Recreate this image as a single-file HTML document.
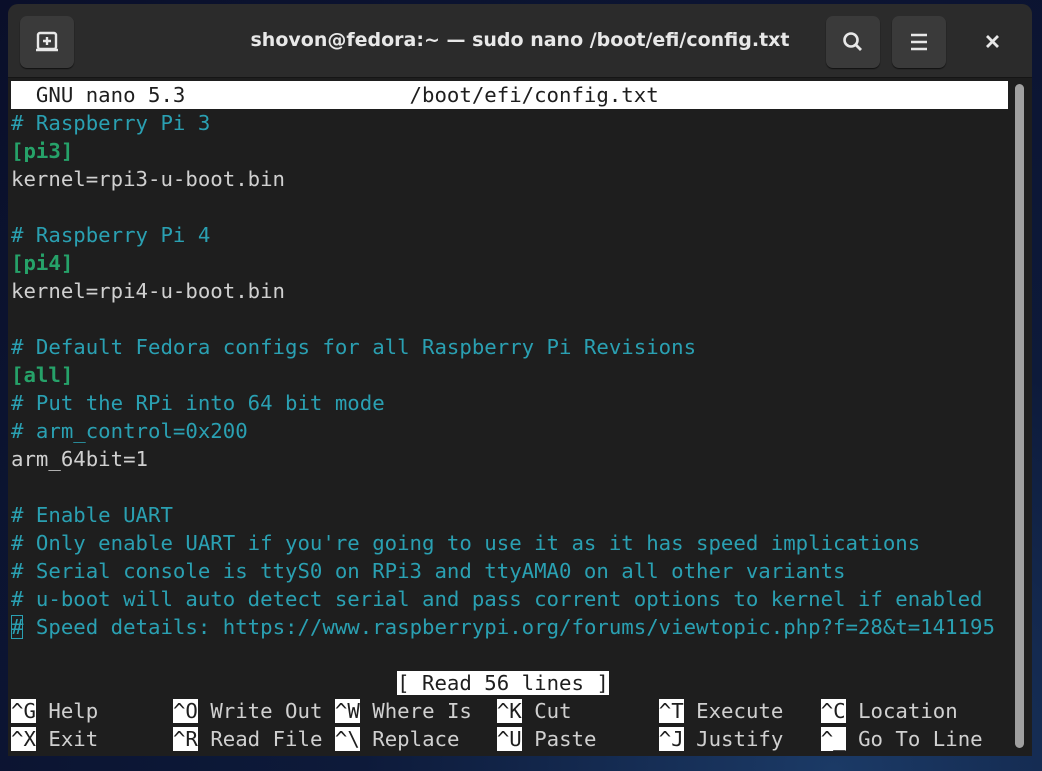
<!DOCTYPE html>
<html><head><meta charset="utf-8"><style>
*{margin:0;padding:0;box-sizing:border-box}
body{width:1042px;height:771px;overflow:hidden;background:radial-gradient(ellipse at 80% 100%,#1b3a66 0%,#0d1a3a 40%,#0a0f2a 100%);position:relative;font-family:"DejaVu Sans Mono","Liberation Mono",monospace}
.win{position:absolute;left:8px;top:4px;width:1024px;height:752px;background:#1e1e1e;border-radius:10px 10px 0 0;overflow:hidden}
.tb{position:absolute;left:0;top:0;width:1024px;height:74px;background:#2b2b2b;border-bottom:1px solid #151515}
.btn{position:absolute;top:12px;width:54px;height:52px;background:#3a3a3a;border-radius:7px;box-shadow:0 1px 1px #111}
.title{position:absolute;left:0;right:0;top:25px;text-align:center;color:#e8e8e8;font-family:"DejaVu Sans","Liberation Sans",sans-serif;font-weight:bold;font-size:19px}
.term{position:absolute;left:3px;top:77px;width:997px}
.l{height:28px;line-height:28px;font-size:20.7px;white-space:pre;color:#d0d0d0}
.c{color:#2aa0b2}.g{color:#26a269;font-weight:bold}
.r{background:#fff;color:#1e1e1e}
.sb{position:absolute;left:1007px;top:80px;width:9px;height:664px;background:#a0a0a0;border-radius:5px}
</style></head><body>
<div class="win">
<div class="tb">
<div class="btn" style="left:12px"><svg width="54" height="52" viewBox="0 0 54 52"><rect x="18" y="17" width="18" height="16" rx="2" fill="none" stroke="#e8e8e8" stroke-width="2.4"/><line x1="16" y1="34" x2="38" y2="34" stroke="#e8e8e8" stroke-width="2.4"/><path d="M27 21v8M23 25h8" stroke="#e8e8e8" stroke-width="2.4"/></svg></div>
<div class="title">shovon@fedora:~ — sudo nano /boot/efi/config.txt</div>
<div class="btn" style="left:818px"><svg width="54" height="52" viewBox="0 0 54 52"><circle cx="25" cy="24" r="6.5" fill="none" stroke="#e8e8e8" stroke-width="2.6"/><line x1="29.5" y1="28.5" x2="35" y2="34" stroke="#e8e8e8" stroke-width="2.8"/></svg></div>
<div class="btn" style="left:884px"><svg width="54" height="52" viewBox="0 0 54 52"><path d="M19 19h16M19 26h16M19 33h16" stroke="#e8e8e8" stroke-width="2.6"/></svg></div>
<svg style="position:absolute;left:970px;top:27px" width="30" height="22" viewBox="0 0 30 22"><path d="M9 5l11 11M20 5L9 16" stroke="#e8e8e8" stroke-width="2.8"/></svg>
</div>
<div class="term">
<div class="l r">  GNU nano 5.3                  /boot/efi/config.txt                                        </div>
<div class="l c"># Raspberry Pi 3</div>
<div class="l g">[pi3]</div>
<div class="l">kernel=rpi3-u-boot.bin</div>
<div class="l"> </div>
<div class="l c"># Raspberry Pi 4</div>
<div class="l g">[pi4]</div>
<div class="l">kernel=rpi4-u-boot.bin</div>
<div class="l"> </div>
<div class="l c"># Default Fedora configs for all Raspberry Pi Revisions</div>
<div class="l g">[all]</div>
<div class="l c"># Put the RPi into 64 bit mode</div>
<div class="l c"># arm_control=0x200</div>
<div class="l">arm_64bit=1</div>
<div class="l"> </div>
<div class="l c"># Enable UART</div>
<div class="l c"># Only enable UART if you're going to use it as it has speed implications</div>
<div class="l c"># Serial console is ttyS0 on RPi3 and ttyAMA0 on all other variants</div>
<div class="l c"># u-boot will auto detect serial and pass corrent options to kernel if enabled</div>
<div class="l c"><span style="outline:1px solid #2aa0b2;outline-offset:-1px">#</span> Speed details: https://www.raspberrypi.org/forums/viewtopic.php?f=28&amp;t=141195</div>
<div class="l"> </div>
<div class="l">                               <span class="r">[ Read 56 lines ]</span></div>
<div class="l"><span class="r">^G</span> Help      <span class="r">^O</span> Write Out <span class="r">^W</span> Where Is  <span class="r">^K</span> Cut       <span class="r">^T</span> Execute   <span class="r">^C</span> Location</div>
<div class="l"><span class="r">^X</span> Exit      <span class="r">^R</span> Read File <span class="r">^\</span> Replace   <span class="r">^U</span> Paste     <span class="r">^J</span> Justify   <span class="r">^_</span> Go To Line</div>
</div>
<div class="sb"></div>
</div>
</body></html>
